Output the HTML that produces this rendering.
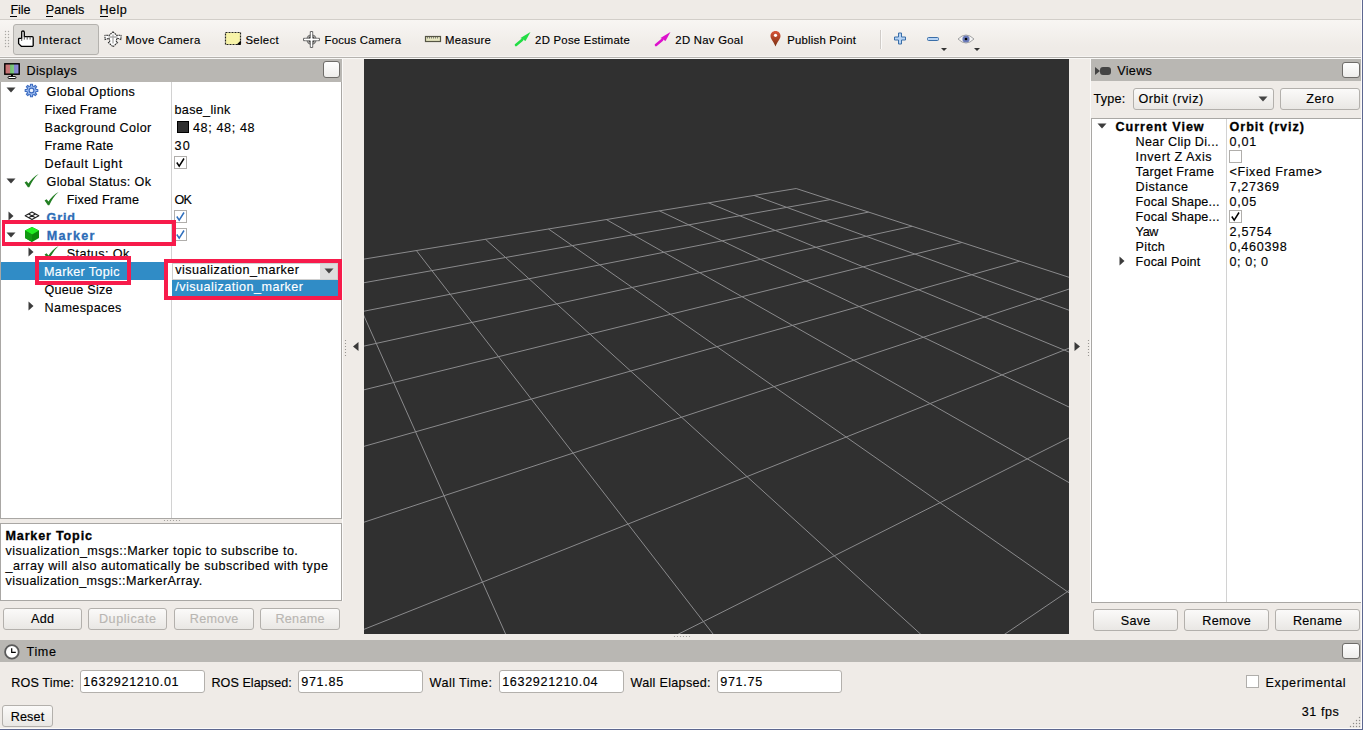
<!DOCTYPE html>
<html><head><meta charset="utf-8"><style>
html,body{margin:0;padding:0;}
body{width:1363px;height:730px;overflow:hidden;position:relative;background:#efebe7;font-family:"Liberation Sans",sans-serif;}
.a{position:absolute;}
.t{position:absolute;white-space:pre;line-height:normal;}
</style></head><body>
<div class="t" style="left:10.4px;top:3.0px;font-size:12.60px;letter-spacing:-0.074px;color:#000;-webkit-text-stroke:0.15px currentColor;">File</div>
<div class="t" style="left:45.8px;top:3.0px;font-size:12.60px;letter-spacing:0.020px;color:#000;-webkit-text-stroke:0.15px currentColor;">Panels</div>
<div class="t" style="left:99.5px;top:3.0px;font-size:12.60px;letter-spacing:0.481px;color:#000;-webkit-text-stroke:0.15px currentColor;">Help</div>
<div class="a" style="left:10px;top:16px;width:7px;height:1px;background:#000"></div>
<div class="a" style="left:46px;top:16px;width:7px;height:1px;background:#000"></div>
<div class="a" style="left:100px;top:16px;width:8px;height:1px;background:#000"></div>
<div class="a" style="left:0px;top:19px;width:1363px;height:1px;background:#d2cec9"></div>
<div class="a" style="left:0px;top:20px;width:1363px;height:36px;background:linear-gradient(#f8f6f3,#efebe7 75%)"></div>
<svg class="a" style="left:0;top:0" width="12" height="57"><circle cx="5.5" cy="31.5" r="0.7" fill="#a9a7a3"/><circle cx="5.5" cy="34.5" r="0.7" fill="#a9a7a3"/><circle cx="5.5" cy="37.5" r="0.7" fill="#a9a7a3"/><circle cx="5.5" cy="40.5" r="0.7" fill="#a9a7a3"/><circle cx="5.5" cy="43.5" r="0.7" fill="#a9a7a3"/><circle cx="5.5" cy="46.5" r="0.7" fill="#a9a7a3"/><circle cx="8.5" cy="31.5" r="0.7" fill="#a9a7a3"/><circle cx="8.5" cy="34.5" r="0.7" fill="#a9a7a3"/><circle cx="8.5" cy="37.5" r="0.7" fill="#a9a7a3"/><circle cx="8.5" cy="40.5" r="0.7" fill="#a9a7a3"/><circle cx="8.5" cy="43.5" r="0.7" fill="#a9a7a3"/><circle cx="8.5" cy="46.5" r="0.7" fill="#a9a7a3"/></svg>
<div class="a" style="left:13px;top:24px;width:86px;height:31px;background:#dcdad6;border:1px solid #b4b2ae;border-radius:3px;box-sizing:border-box"></div>
<div class="t" style="left:38.6px;top:34.0px;font-size:11.34px;letter-spacing:0.617px;color:#000;-webkit-text-stroke:0.15px currentColor;">Interact</div>
<div class="t" style="left:125.5px;top:34.0px;font-size:11.34px;letter-spacing:0.356px;color:#000;-webkit-text-stroke:0.15px currentColor;">Move Camera</div>
<div class="t" style="left:245.4px;top:34.0px;font-size:11.34px;letter-spacing:0.360px;color:#000;-webkit-text-stroke:0.15px currentColor;">Select</div>
<div class="t" style="left:324.5px;top:34.0px;font-size:11.34px;letter-spacing:0.209px;color:#000;-webkit-text-stroke:0.15px currentColor;">Focus Camera</div>
<div class="t" style="left:445.0px;top:34.0px;font-size:11.34px;letter-spacing:0.297px;color:#000;-webkit-text-stroke:0.15px currentColor;">Measure</div>
<div class="t" style="left:535.1px;top:34.0px;font-size:11.34px;letter-spacing:0.267px;color:#000;-webkit-text-stroke:0.15px currentColor;">2D Pose Estimate</div>
<div class="t" style="left:675.3px;top:34.0px;font-size:11.34px;letter-spacing:0.282px;color:#000;-webkit-text-stroke:0.15px currentColor;">2D Nav Goal</div>
<div class="t" style="left:787.3px;top:34.0px;font-size:11.34px;letter-spacing:0.213px;color:#000;-webkit-text-stroke:0.15px currentColor;">Publish Point</div>
<svg class="a" style="left:17px;top:30px" width="18" height="18" viewBox="0 0 18 18">
<path d="M4.7 8.3 L4.7 2.2 Q4.7 1.0 6.0 1.0 Q7.3 1.0 7.3 2.2 L7.3 6.6 L15.2 6.6 Q16.2 6.6 16.2 7.8 L16.2 15.6 L15.6 16.3 L4.3 16.3 L1.6 13.6 L1.6 8.9 Q1.6 8.3 2.4 8.3 Z" fill="#fff" stroke="#000" stroke-width="1.3" stroke-linejoin="round"/>
<path d="M4.7 8.3 L4.7 11 M7.3 6.6 L7.3 9.6 M10.2 6.6 L10.2 9.6 M13.1 6.6 L13.1 9.6" stroke="#444" stroke-width="0.9"/>
</svg>
<svg class="a" style="left:104px;top:30px" width="19" height="18" viewBox="0 0 19 18">
<path d="M9 1.8 L12.8 5.4 L17 5.2 L17 9.6 L13 8.2 L12.2 11.2 L13.6 12.4 L9 16.8 L4.4 12.4 L5.8 11.2 L5 8.2 L1 9.6 L1 5.2 L5.2 5.4 Z" fill="#fff" stroke="#2a2a2a" stroke-width="1.1" stroke-linejoin="round" stroke-dasharray="1.6 0.7"/>
<path d="M9 4.5 V13.5 M4.5 7 H13.5" stroke="#aaa" stroke-width="1.3"/>
</svg>
<svg class="a" style="left:224px;top:31px" width="18" height="15" viewBox="0 0 18 15">
<rect x="1.5" y="1.5" width="15" height="12" fill="#f7f3a8" stroke="#222" stroke-width="1.2" stroke-dasharray="2 1"/>
<path d="M12.5 13.8 L16.8 9.5 L16.8 13.8 Z" fill="#000"/>
</svg>
<svg class="a" style="left:302px;top:30px" width="19" height="19" viewBox="0 0 19 19">
<path d="M8.3 1.5 h2.4 v6.8 h6.8 v2.4 h-6.8 v6.8 h-2.4 v-6.8 h-6.8 v-2.4 h6.8 z" fill="#fff" stroke="#666" stroke-width="1"/>
<circle cx="9.5" cy="9.5" r="4.6" fill="none" stroke="#666" stroke-width="1.1"/>
<path d="M9.5 3 V16 M3 9.5 H16" stroke="#fff" stroke-width="1.3"/>
<path d="M6.6 6.6 h1.6 v1.6 h-1.6z M10.8 6.6 h1.6 v1.6 h-1.6z M6.6 10.8 h1.6 v1.6 h-1.6z M10.8 10.8 h1.6 v1.6 h-1.6z" fill="#444"/>
</svg>
<svg class="a" style="left:424px;top:35px" width="18" height="8" viewBox="0 0 18 8">
<rect x="1.5" y="1.5" width="15" height="5" fill="#e6e6c0" stroke="#555544" stroke-width="1.2"/>
<path d="M3.5 2 v1.5 M5.5 2 v1.5 M7.5 2 v1.5 M9.5 2 v1.5 M11.5 2 v1.5 M13.5 2 v1.5" stroke="#666" stroke-width="0.8"/>
</svg>
<svg class="a" style="left:514px;top:30px" width="18" height="17" viewBox="0 0 18 17">
<path d="M2 15 L8 10" stroke="#22dd44" stroke-width="2.6" stroke-linecap="round"/>
<path d="M16.5 2 L11.5 11 L6.5 8 Z" fill="#22dd44"/>
</svg>
<svg class="a" style="left:654px;top:30px" width="18" height="17" viewBox="0 0 18 17">
<path d="M2 15 L8 10" stroke="#dd11cc" stroke-width="2.6" stroke-linecap="round"/>
<path d="M16.5 2 L11.5 11 L6.5 8 Z" fill="#dd11cc"/>
</svg>
<svg class="a" style="left:769px;top:30px" width="13" height="18" viewBox="0 0 13 18">
<defs><linearGradient id="pg" x1="0" y1="0" x2="0" y2="1"><stop offset="0" stop-color="#d9553a"/><stop offset="1" stop-color="#7a3010"/></linearGradient></defs>
<path d="M6.5 1 C9.5 1 11.5 3.2 11.5 6 C11.5 9 8 12 6.5 16.5 C5 12 1.5 9 1.5 6 C1.5 3.2 3.5 1 6.5 1 Z" fill="url(#pg)"/>
<circle cx="6.5" cy="5.3" r="1.6" fill="#fff"/>
</svg>
<div class="a" style="left:880px;top:30px;width:1px;height:19px;background:#d0ccc8"></div>
<div class="a" style="left:881px;top:30px;width:1px;height:19px;background:#fbfaf9"></div>
<svg class="a" style="left:893px;top:32px" width="15" height="14" viewBox="0 0 15 14">
<path d="M5.5 1 h3 v4 h4 v3 h-4 v4 h-3 v-4 h-4 v-3 h4 z" fill="#b8d4f4" stroke="#3a6ea8" stroke-width="1"/>
</svg>
<svg class="a" style="left:926px;top:36px" width="15" height="7" viewBox="0 0 15 7">
<rect x="1.5" y="1.5" width="11" height="3" rx="1" fill="#b8d4f4" stroke="#3a6ea8" stroke-width="1"/>
</svg>
<svg class="a" style="left:940px;top:47px" width="8" height="5" viewBox="0 0 8 5"><path d="M1 1 L7 1 L4 4 Z" fill="#333"/></svg>
<svg class="a" style="left:957px;top:33px" width="18" height="12" viewBox="0 0 18 12">
<path d="M1 6 Q9 -2 17 6 Q9 14 1 6 Z" fill="#f4f4f4" stroke="#999" stroke-width="0.9"/>
<circle cx="9" cy="6" r="3.6" fill="#6a7ab8"/>
<circle cx="9" cy="6" r="1.3" fill="#000"/>
</svg>
<svg class="a" style="left:973px;top:47px" width="8" height="5" viewBox="0 0 8 5"><path d="M1 1 L7 1 L4 4 Z" fill="#333"/></svg>
<div class="a" style="left:0px;top:56px;width:1363px;height:1px;background:#f7f5f3"></div>
<div class="a" style="left:0px;top:57px;width:1363px;height:1px;background:#b5b2ae"></div>
<div class="a" style="left:0px;top:58px;width:1363px;height:1px;background:#f9f8f6"></div>
<div class="a" style="left:0px;top:59px;width:342px;height:23px;background:#b9b7b3"></div>
<svg class="a" style="left:3px;top:62px" width="18" height="18" viewBox="0 0 18 18">
<defs><linearGradient id="mg" x1="0" y1="0" x2="1" y2="0"><stop offset="0" stop-color="#c87070"/><stop offset="0.33" stop-color="#c87878"/><stop offset="0.4" stop-color="#70c070"/><stop offset="0.6" stop-color="#80c880"/><stop offset="0.68" stop-color="#8080d0"/><stop offset="1" stop-color="#9090d8"/></linearGradient></defs>
<rect x="1.8" y="1.8" width="14.4" height="10.4" fill="url(#mg)" stroke="#000" stroke-width="1.4"/>
<path d="M8 12.5 h2 v2 h-2z" fill="#000"/>
<rect x="5" y="14.5" width="8" height="2" rx="1" fill="#fff" stroke="#000" stroke-width="0.9"/>
</svg>
<div class="t" style="left:26.4px;top:64.0px;font-size:12.60px;letter-spacing:0.410px;color:#000;-webkit-text-stroke:0.15px currentColor;">Displays</div>
<div class="a" style="left:323px;top:61px;width:17px;height:17px;background:linear-gradient(#fefefe,#eeedeb);border:1px solid #6e6c69;border-radius:3px;box-sizing:border-box"></div>
<div class="a" style="left:0px;top:82px;width:342px;height:437px;background:#fff;border:1px solid #a9a7a4;border-top:none;box-sizing:border-box"></div>
<div class="a" style="left:171px;top:82px;width:1px;height:436px;background:#d2d2d2"></div>
<div class="a" style="left:1px;top:262px;width:340px;height:18px;background:#308cc6"></div>
<svg class="a" style="left:6px;top:87px" width="10" height="6" viewBox="0 0 10 6"><path d="M0.5 0.5 L9.5 0.5 L5 5.5 Z" fill="#3c3c3c"/></svg>
<svg class="a" style="left:24px;top:83px" width="15" height="15" viewBox="0 0 15 15">
<path d="M6.54 2.90 L6.45 1.19 L8.55 1.19 L8.46 2.90 L10.07 3.57 L11.22 2.29 L12.71 3.78 L11.43 4.93 L12.10 6.54 L13.81 6.45 L13.81 8.55 L12.10 8.46 L11.43 10.07 L12.71 11.22 L11.22 12.71 L10.07 11.43 L8.46 12.10 L8.55 13.81 L6.45 13.81 L6.54 12.10 L4.93 11.43 L3.78 12.71 L2.29 11.22 L3.57 10.07 L2.90 8.46 L1.19 8.55 L1.19 6.45 L2.90 6.54 L3.57 4.93 L2.29 3.78 L3.78 2.29 L4.93 3.57 Z" fill="#9cbcf0" stroke="#3d6cc0" stroke-width="1.1" stroke-linejoin="round"/>
<circle cx="7.5" cy="7.5" r="2.4" fill="#eef4ff" stroke="#3d6cc0" stroke-width="1.2"/>
</svg>
<div class="t" style="left:46.5px;top:85.0px;font-size:12.60px;letter-spacing:0.388px;color:#000;-webkit-text-stroke:0.15px currentColor;">Global Options</div>
<div class="t" style="left:44.6px;top:103.0px;font-size:12.60px;letter-spacing:0.158px;color:#000;-webkit-text-stroke:0.15px currentColor;">Fixed Frame</div>
<div class="t" style="left:174.5px;top:103.0px;font-size:12.60px;letter-spacing:0.324px;color:#000;-webkit-text-stroke:0.15px currentColor;">base_link</div>
<div class="t" style="left:44.6px;top:121.0px;font-size:12.60px;letter-spacing:0.392px;color:#000;-webkit-text-stroke:0.15px currentColor;">Background Color</div>
<div class="a" style="left:177px;top:121px;width:12px;height:12px;background:#303030;border:1px solid #000;box-sizing:border-box"></div>
<div class="t" style="left:193.0px;top:121.0px;font-size:12.60px;letter-spacing:0.608px;color:#000;-webkit-text-stroke:0.15px currentColor;">48; 48; 48</div>
<div class="t" style="left:44.6px;top:139.0px;font-size:12.60px;letter-spacing:0.244px;color:#000;-webkit-text-stroke:0.15px currentColor;">Frame Rate</div>
<div class="t" style="left:174.5px;top:139.0px;font-size:12.60px;letter-spacing:1.254px;color:#000;-webkit-text-stroke:0.15px currentColor;">30</div>
<div class="t" style="left:44.6px;top:157.0px;font-size:12.60px;letter-spacing:0.572px;color:#000;-webkit-text-stroke:0.15px currentColor;">Default Light</div>
<div class="a" style="left:174px;top:156px;width:13px;height:13px;border:1px solid #b0aeab;background:#fff;box-sizing:border-box"></div>
<svg class="a" style="left:174px;top:156px" width="13" height="13" viewBox="0 0 13 13"><path d="M2.8 6.5 L5.2 10.2 L10 2.5" fill="none" stroke="#000" stroke-width="1.5"/></svg>
<svg class="a" style="left:6px;top:178px" width="10" height="6" viewBox="0 0 10 6"><path d="M0.5 0.5 L9.5 0.5 L5 5.5 Z" fill="#3c3c3c"/></svg>
<svg class="a" style="left:24px;top:173px" width="16" height="15" viewBox="0 0 16 15"><path d="M0.6 9.6 L2.6 8.2 L4.5 10.6 Q8.5 4.2 14.6 1.0 Q9.2 5.6 5.3 14.2 L3.9 14.2 Z" fill="#237f23"/></svg>
<div class="t" style="left:46.5px;top:175.0px;font-size:12.60px;letter-spacing:0.365px;color:#000;-webkit-text-stroke:0.15px currentColor;">Global Status: Ok</div>
<svg class="a" style="left:44px;top:191px" width="16" height="15" viewBox="0 0 16 15"><path d="M0.6 9.6 L2.6 8.2 L4.5 10.6 Q8.5 4.2 14.6 1.0 Q9.2 5.6 5.3 14.2 L3.9 14.2 Z" fill="#237f23"/></svg>
<div class="t" style="left:66.7px;top:193.0px;font-size:12.60px;letter-spacing:0.158px;color:#000;-webkit-text-stroke:0.15px currentColor;">Fixed Frame</div>
<div class="t" style="left:174.5px;top:193.0px;font-size:12.60px;letter-spacing:-0.890px;color:#000;-webkit-text-stroke:0.15px currentColor;">OK</div>
<svg class="a" style="left:8px;top:211px" width="6" height="10" viewBox="0 0 6 10"><path d="M0.5 0.5 L5.5 5 L0.5 9.5 Z" fill="#3c3c3c"/></svg>
<svg class="a" style="left:24px;top:211px" width="16" height="10" viewBox="0 0 16 10">
<path d="M8 1 L14.8 4.8 L8 8.6 L1.2 4.8 Z M4.6 2.9 L11.4 6.7 M11.4 2.9 L4.6 6.7" fill="none" stroke="#222" stroke-width="1.15" stroke-linejoin="round"/>
</svg>
<div class="t" style="left:46.5px;top:211.0px;font-size:12.60px;letter-spacing:0.857px;color:#2d6cb6;font-weight:bold;-webkit-text-stroke:0.3px currentColor;">Grid</div>
<div class="a" style="left:174px;top:210px;width:13px;height:13px;border:1px solid #b0aeab;background:#fff;box-sizing:border-box"></div>
<svg class="a" style="left:174px;top:210px" width="13" height="13" viewBox="0 0 13 13"><path d="M2.8 6.5 L5.2 10.2 L10 2.5" fill="none" stroke="#2f6fbd" stroke-width="1.5"/></svg>
<svg class="a" style="left:6px;top:232px" width="10" height="6" viewBox="0 0 10 6"><path d="M0.5 0.5 L9.5 0.5 L5 5.5 Z" fill="#3c3c3c"/></svg>
<svg class="a" style="left:24px;top:226px" width="16" height="17" viewBox="0 0 16 17">
<path d="M8 1 L15 4.5 L15 12 L8 16 L1 12 L1 4.5 Z" fill="#0a8a0a"/>
<path d="M8 1 L15 4.5 L8 8.5 L1 4.5 Z" fill="#22ee22"/>
<path d="M1 4.5 L8 8.5 L8 16 L1 12 Z" fill="#129912"/>
</svg>
<div class="t" style="left:46.7px;top:229.0px;font-size:12.60px;letter-spacing:1.269px;color:#2d6cb6;font-weight:bold;-webkit-text-stroke:0.3px currentColor;">Marker</div>
<div class="a" style="left:174px;top:228px;width:13px;height:13px;border:1px solid #b0aeab;background:#fff;box-sizing:border-box"></div>
<svg class="a" style="left:174px;top:228px" width="13" height="13" viewBox="0 0 13 13"><path d="M2.8 6.5 L5.2 10.2 L10 2.5" fill="none" stroke="#2f6fbd" stroke-width="1.5"/></svg>
<svg class="a" style="left:28px;top:247px" width="6" height="10" viewBox="0 0 6 10"><path d="M0.5 0.5 L5.5 5 L0.5 9.5 Z" fill="#3c3c3c"/></svg>
<svg class="a" style="left:44px;top:245px" width="16" height="15" viewBox="0 0 16 15"><path d="M0.6 9.6 L2.6 8.2 L4.5 10.6 Q8.5 4.2 14.6 1.0 Q9.2 5.6 5.3 14.2 L3.9 14.2 Z" fill="#237f23"/></svg>
<div class="t" style="left:66.8px;top:247.0px;font-size:12.60px;letter-spacing:0.408px;color:#000;-webkit-text-stroke:0.15px currentColor;">Status: Ok</div>
<div class="t" style="left:44.0px;top:265.0px;font-size:12.60px;letter-spacing:0.326px;color:#fff;-webkit-text-stroke:0.15px currentColor;">Marker Topic</div>
<div class="t" style="left:44.6px;top:283.0px;font-size:12.60px;letter-spacing:0.225px;color:#000;-webkit-text-stroke:0.15px currentColor;">Queue Size</div>
<svg class="a" style="left:28px;top:301px" width="6" height="10" viewBox="0 0 6 10"><path d="M0.5 0.5 L5.5 5 L0.5 9.5 Z" fill="#3c3c3c"/></svg>
<div class="t" style="left:44.6px;top:301.0px;font-size:12.60px;letter-spacing:0.369px;color:#000;-webkit-text-stroke:0.15px currentColor;">Namespaces</div>
<div class="a" style="left:167px;top:262px;width:5px;height:34px;background:#fff"></div>
<div class="a" style="left:172px;top:263px;width:166px;height:17px;background:#fff;border:1px solid #cfcfcf;box-sizing:border-box"></div>
<div class="a" style="left:320px;top:264px;width:17px;height:15px;background:#dedede"></div>
<svg class="a" style="left:324px;top:268px" width="10" height="6" viewBox="0 0 10 6"><path d="M0.5 0.5 L9.5 0.5 L5 5.5 Z" fill="#444"/></svg>
<div class="t" style="left:175.3px;top:263.0px;font-size:12.60px;letter-spacing:0.470px;color:#000;-webkit-text-stroke:0.15px currentColor;">visualization_marker</div>
<div class="a" style="left:172px;top:280px;width:166px;height:16px;background:#308cc6"></div>
<div class="t" style="left:175.3px;top:280.0px;font-size:12.60px;letter-spacing:0.473px;color:#fff;-webkit-text-stroke:0.15px currentColor;">/visualization_marker</div>
<svg class="a" style="left:0;top:0" width="342" height="523"><circle cx="164.5" cy="520.5" r="0.6" fill="#9a9894"/><circle cx="167.5" cy="520.5" r="0.6" fill="#9a9894"/><circle cx="170.5" cy="520.5" r="0.6" fill="#9a9894"/><circle cx="173.5" cy="520.5" r="0.6" fill="#9a9894"/><circle cx="176.5" cy="520.5" r="0.6" fill="#9a9894"/><circle cx="179.5" cy="520.5" r="0.6" fill="#9a9894"/></svg>
<div class="a" style="left:0px;top:523px;width:342px;height:78px;background:#fff;border:1px solid #a9a7a4;box-sizing:border-box"></div>
<div class="t" style="left:5.5px;top:529.0px;font-size:12.60px;letter-spacing:0.819px;color:#000;font-weight:bold;-webkit-text-stroke:0.3px currentColor;">Marker Topic</div>
<div class="t" style="left:5.5px;top:544.0px;font-size:12.60px;letter-spacing:0.447px;color:#000;-webkit-text-stroke:0.15px currentColor;">visualization_msgs::Marker topic to subscribe to.</div>
<div class="t" style="left:5.5px;top:559.0px;font-size:12.60px;letter-spacing:0.510px;color:#000;-webkit-text-stroke:0.15px currentColor;">_array will also automatically be subscribed with type</div>
<div class="t" style="left:5.5px;top:574.0px;font-size:12.60px;letter-spacing:0.391px;color:#000;-webkit-text-stroke:0.15px currentColor;">visualization_msgs::MarkerArray.</div>
<div class="a" style="left:3px;top:608px;width:79px;height:22px;background:linear-gradient(#fbfaf9,#e9e7e4);border:1px solid #b3b0ac;border-radius:3px;box-sizing:border-box"></div>
<div class="t" style="left:30.9px;top:612.0px;font-size:12.60px;letter-spacing:0.407px;color:#000;-webkit-text-stroke:0.15px currentColor;">Add</div>
<div class="a" style="left:88px;top:608px;width:79px;height:22px;background:linear-gradient(#fbfaf9,#e9e7e4);border:1px solid #b3b0ac;border-radius:3px;box-sizing:border-box"></div>
<div class="t" style="left:98.9px;top:612.0px;font-size:12.60px;letter-spacing:0.580px;color:#b9b6b2;-webkit-text-stroke:0.15px currentColor;">Duplicate</div>
<div class="a" style="left:174px;top:608px;width:80px;height:22px;background:linear-gradient(#fbfaf9,#e9e7e4);border:1px solid #b3b0ac;border-radius:3px;box-sizing:border-box"></div>
<div class="t" style="left:189.7px;top:612.0px;font-size:12.60px;letter-spacing:0.356px;color:#b9b6b2;-webkit-text-stroke:0.15px currentColor;">Remove</div>
<div class="a" style="left:260px;top:608px;width:80px;height:22px;background:linear-gradient(#fbfaf9,#e9e7e4);border:1px solid #b3b0ac;border-radius:3px;box-sizing:border-box"></div>
<div class="t" style="left:275.4px;top:612.0px;font-size:12.60px;letter-spacing:0.317px;color:#b9b6b2;-webkit-text-stroke:0.15px currentColor;">Rename</div>
<div class="a" style="left:2px;top:220px;width:174px;height:26px;border:4px solid #f71b4b;border-left-width:3px;box-sizing:border-box"></div>
<div class="a" style="left:35px;top:256px;width:96px;height:29px;border:4px solid #f71b4b;box-sizing:border-box"></div>
<div class="a" style="left:164px;top:259px;width:178px;height:41px;border:4px solid #f71b4b;box-sizing:border-box"></div>
<div class="a" style="left:342px;top:59px;width:1px;height:542px;background:#fbfaf9"></div>
<svg class="a" style="left:0;top:0" width="1100" height="360"><circle cx="345.5" cy="340.5" r="0.6" fill="#8a8884"/><circle cx="1088.5" cy="340.5" r="0.6" fill="#8a8884"/><circle cx="345.5" cy="343.5" r="0.6" fill="#8a8884"/><circle cx="1088.5" cy="343.5" r="0.6" fill="#8a8884"/><circle cx="345.5" cy="346.5" r="0.6" fill="#8a8884"/><circle cx="1088.5" cy="346.5" r="0.6" fill="#8a8884"/><circle cx="345.5" cy="349.5" r="0.6" fill="#8a8884"/><circle cx="1088.5" cy="349.5" r="0.6" fill="#8a8884"/><circle cx="345.5" cy="352.5" r="0.6" fill="#8a8884"/><circle cx="1088.5" cy="352.5" r="0.6" fill="#8a8884"/><circle cx="345.5" cy="355.5" r="0.6" fill="#8a8884"/><circle cx="1088.5" cy="355.5" r="0.6" fill="#8a8884"/></svg>
<svg class="a" style="left:352px;top:341px" width="8" height="11" viewBox="0 0 8 11"><path d="M1 5.5 L6.5 1 L6.5 10 Z" fill="#3a3a3a"/></svg>
<svg class="a" style="left:1073px;top:341px" width="8" height="11" viewBox="0 0 8 11"><path d="M7 5.5 L1.5 1 L1.5 10 Z" fill="#3a3a3a"/></svg>
<svg class="a" style="left:364px;top:59px;background:#303030" width="705" height="575"><g stroke="#8a8a8c" stroke-width="1" fill="none"><line x1="1165.38" y1="368.12" x2="-625.80" y2="2239.53"/><line x1="1165.38" y1="368.12" x2="432.21" y2="129.53"/><line x1="1017.06" y1="319.86" x2="-426.70" y2="1299.41"/><line x1="1129.31" y1="405.81" x2="390.00" y2="136.42"/><line x1="899.02" y1="281.44" x2="-343.28" y2="905.50"/><line x1="1086.22" y1="450.83" x2="344.55" y2="143.84"/><line x1="802.84" y1="250.15" x2="-297.42" y2="688.94"/><line x1="1033.83" y1="505.56" x2="295.47" y2="151.86"/><line x1="722.97" y1="224.15" x2="-268.41" y2="551.96"/><line x1="968.77" y1="573.54" x2="242.29" y2="160.54"/><line x1="655.58" y1="202.22" x2="-248.41" y2="457.51"/><line x1="885.81" y1="660.21" x2="184.49" y2="169.98"/><line x1="597.95" y1="183.47" x2="-233.78" y2="388.44"/><line x1="776.38" y1="774.54" x2="121.44" y2="180.27"/><line x1="548.12" y1="167.25" x2="-222.62" y2="335.73"/><line x1="625.42" y1="932.27" x2="52.38" y2="191.55"/><line x1="504.59" y1="153.09" x2="-213.82" y2="294.19"/><line x1="403.74" y1="1163.88" x2="-23.59" y2="203.95"/><line x1="466.24" y1="140.61" x2="-206.71" y2="260.60"/><line x1="46.43" y1="1537.19" x2="-107.55" y2="217.66"/><line x1="432.21" y1="129.53" x2="-200.84" y2="232.89"/><line x1="-625.80" y1="2239.53" x2="-200.84" y2="232.89"/></g></svg>
<svg class="a" style="left:0;top:0" width="700" height="640"><circle cx="674.5" cy="636.5" r="0.6" fill="#9a9894"/><circle cx="677.5" cy="636.5" r="0.6" fill="#9a9894"/><circle cx="680.5" cy="636.5" r="0.6" fill="#9a9894"/><circle cx="683.5" cy="636.5" r="0.6" fill="#9a9894"/><circle cx="686.5" cy="636.5" r="0.6" fill="#9a9894"/><circle cx="689.5" cy="636.5" r="0.6" fill="#9a9894"/></svg>
<div class="a" style="left:1090px;top:59px;width:1px;height:544px;background:#fbfaf9"></div>
<div class="a" style="left:1091px;top:59px;width:271px;height:22px;background:#b9b7b3"></div>
<svg class="a" style="left:1094px;top:66px" width="18" height="10" viewBox="0 0 18 10">
<path d="M1 1 L6 5 L1 9 Z" fill="#444"/>
<rect x="6" y="1" width="11" height="8" rx="3" fill="#444"/>
</svg>
<div class="t" style="left:1117.2px;top:64.0px;font-size:12.60px;letter-spacing:0.336px;color:#000;-webkit-text-stroke:0.15px currentColor;">Views</div>
<div class="a" style="left:1342px;top:62px;width:18px;height:16px;background:linear-gradient(#fefefe,#eeedeb);border:1px solid #6e6c69;border-radius:3px;box-sizing:border-box"></div>
<div class="t" style="left:1093.6px;top:92.0px;font-size:12.60px;letter-spacing:0.197px;color:#000;-webkit-text-stroke:0.15px currentColor;">Type:</div>
<div class="a" style="left:1133px;top:88px;width:141px;height:22px;background:linear-gradient(#fbfaf9,#e9e7e4);border:1px solid #b3b0ac;border-radius:3px;box-sizing:border-box"></div>
<div class="t" style="left:1138.4px;top:92.0px;font-size:12.60px;letter-spacing:0.554px;color:#000;-webkit-text-stroke:0.15px currentColor;">Orbit (rviz)</div>
<svg class="a" style="left:1258px;top:96px" width="10" height="6" viewBox="0 0 10 6"><path d="M0.5 0.5 L9.5 0.5 L5 5.5 Z" fill="#444"/></svg>
<div class="a" style="left:1280px;top:88px;width:80px;height:22px;background:linear-gradient(#fbfaf9,#e9e7e4);border:1px solid #b3b0ac;border-radius:3px;box-sizing:border-box"></div>
<div class="t" style="left:1306.2px;top:92.0px;font-size:12.60px;letter-spacing:0.569px;color:#000;-webkit-text-stroke:0.15px currentColor;">Zero</div>
<div class="a" style="left:1091px;top:118px;width:271px;height:485px;background:#fff;border:1px solid #a9a7a4;box-sizing:border-box"></div>
<div class="a" style="left:1226px;top:119px;width:1px;height:483px;background:#d2d2d2"></div>
<svg class="a" style="left:1097px;top:123px" width="10" height="6" viewBox="0 0 10 6"><path d="M0.5 0.5 L9.5 0.5 L5 5.5 Z" fill="#3c3c3c"/></svg>
<div class="t" style="left:1115.5px;top:120.0px;font-size:12.60px;letter-spacing:0.973px;color:#000;font-weight:bold;-webkit-text-stroke:0.3px currentColor;">Current View</div>
<div class="t" style="left:1229.5px;top:120.0px;font-size:12.60px;letter-spacing:0.986px;color:#000;font-weight:bold;-webkit-text-stroke:0.3px currentColor;">Orbit (rviz)</div>
<div class="t" style="left:1135.6px;top:135.0px;font-size:12.60px;letter-spacing:0.324px;color:#000;-webkit-text-stroke:0.15px currentColor;">Near Clip Di...</div>
<div class="t" style="left:1229.5px;top:135.0px;font-size:12.60px;letter-spacing:0.732px;color:#000;-webkit-text-stroke:0.15px currentColor;">0,01</div>
<div class="t" style="left:1135.6px;top:150.0px;font-size:12.60px;letter-spacing:0.558px;color:#000;-webkit-text-stroke:0.15px currentColor;">Invert Z Axis</div>
<div class="t" style="left:1135.6px;top:165.0px;font-size:12.60px;letter-spacing:0.310px;color:#000;-webkit-text-stroke:0.15px currentColor;">Target Frame</div>
<div class="t" style="left:1229.5px;top:165.0px;font-size:12.60px;letter-spacing:0.581px;color:#000;-webkit-text-stroke:0.15px currentColor;">&lt;Fixed Frame&gt;</div>
<div class="t" style="left:1135.6px;top:180.0px;font-size:12.60px;letter-spacing:0.493px;color:#000;-webkit-text-stroke:0.15px currentColor;">Distance</div>
<div class="t" style="left:1229.5px;top:180.0px;font-size:12.60px;letter-spacing:0.680px;color:#000;-webkit-text-stroke:0.15px currentColor;">7,27369</div>
<div class="t" style="left:1135.6px;top:195.0px;font-size:12.60px;letter-spacing:0.207px;color:#000;-webkit-text-stroke:0.15px currentColor;">Focal Shape...</div>
<div class="t" style="left:1229.5px;top:195.0px;font-size:12.60px;letter-spacing:0.732px;color:#000;-webkit-text-stroke:0.15px currentColor;">0,05</div>
<div class="t" style="left:1135.6px;top:210.0px;font-size:12.60px;letter-spacing:0.207px;color:#000;-webkit-text-stroke:0.15px currentColor;">Focal Shape...</div>
<div class="t" style="left:1135.6px;top:225.0px;font-size:12.60px;letter-spacing:-0.365px;color:#000;-webkit-text-stroke:0.15px currentColor;">Yaw</div>
<div class="t" style="left:1229.5px;top:225.0px;font-size:12.60px;letter-spacing:0.690px;color:#000;-webkit-text-stroke:0.15px currentColor;">2,5754</div>
<div class="t" style="left:1135.6px;top:240.0px;font-size:12.60px;letter-spacing:0.301px;color:#000;-webkit-text-stroke:0.15px currentColor;">Pitch</div>
<div class="t" style="left:1229.5px;top:240.0px;font-size:12.60px;letter-spacing:0.672px;color:#000;-webkit-text-stroke:0.15px currentColor;">0,460398</div>
<div class="t" style="left:1135.6px;top:255.0px;font-size:12.60px;letter-spacing:0.168px;color:#000;-webkit-text-stroke:0.15px currentColor;">Focal Point</div>
<div class="t" style="left:1229.5px;top:255.0px;font-size:12.60px;letter-spacing:0.599px;color:#000;-webkit-text-stroke:0.15px currentColor;">0; 0; 0</div>
<div class="a" style="left:1229px;top:150px;width:13px;height:13px;border:1px solid #b0aeab;background:#fff;box-sizing:border-box"></div>
<div class="a" style="left:1229px;top:210px;width:13px;height:13px;border:1px solid #b0aeab;background:#fff;box-sizing:border-box"></div>
<svg class="a" style="left:1229px;top:210px" width="13" height="13" viewBox="0 0 13 13"><path d="M2.8 6.5 L5.2 10.2 L10 2.5" fill="none" stroke="#000" stroke-width="1.5"/></svg>
<svg class="a" style="left:1119px;top:256px" width="6" height="10" viewBox="0 0 6 10"><path d="M0.5 0.5 L5.5 5 L0.5 9.5 Z" fill="#3c3c3c"/></svg>
<div class="a" style="left:1093px;top:609px;width:85px;height:22px;background:linear-gradient(#fbfaf9,#e9e7e4);border:1px solid #b3b0ac;border-radius:3px;box-sizing:border-box"></div>
<div class="t" style="left:1120.8px;top:614.0px;font-size:12.60px;letter-spacing:0.245px;color:#000;-webkit-text-stroke:0.15px currentColor;">Save</div>
<div class="a" style="left:1184px;top:609px;width:85px;height:22px;background:linear-gradient(#fbfaf9,#e9e7e4);border:1px solid #b3b0ac;border-radius:3px;box-sizing:border-box"></div>
<div class="t" style="left:1202.2px;top:614.0px;font-size:12.60px;letter-spacing:0.356px;color:#000;-webkit-text-stroke:0.15px currentColor;">Remove</div>
<div class="a" style="left:1275px;top:609px;width:85px;height:22px;background:linear-gradient(#fbfaf9,#e9e7e4);border:1px solid #b3b0ac;border-radius:3px;box-sizing:border-box"></div>
<div class="t" style="left:1292.9px;top:614.0px;font-size:12.60px;letter-spacing:0.317px;color:#000;-webkit-text-stroke:0.15px currentColor;">Rename</div>
<div class="a" style="left:0px;top:640px;width:1362px;height:22px;background:#b9b7b3"></div>
<svg class="a" style="left:3px;top:643px" width="18" height="18" viewBox="0 0 18 18">
<circle cx="8.9" cy="8.9" r="6.8" fill="#fff" stroke="#5a5a5a" stroke-width="1.8"/>
<path d="M8.7 5.2 V9.4 H12.8" fill="none" stroke="#000" stroke-width="1.2"/>
</svg>
<div class="t" style="left:26.6px;top:645.0px;font-size:12.60px;letter-spacing:0.612px;color:#000;-webkit-text-stroke:0.15px currentColor;">Time</div>
<div class="a" style="left:1342px;top:643px;width:18px;height:16px;background:linear-gradient(#fefefe,#eeedeb);border:1px solid #6e6c69;border-radius:3px;box-sizing:border-box"></div>
<div class="t" style="left:11.3px;top:676.0px;font-size:12.60px;letter-spacing:0.127px;color:#000;-webkit-text-stroke:0.15px currentColor;">ROS Time:</div>
<div class="a" style="left:80px;top:670px;width:125px;height:23px;background:#fff;border:1px solid #b3b0ac;border-radius:3px;box-sizing:border-box"></div>
<div class="t" style="left:83.2px;top:675.0px;font-size:12.60px;letter-spacing:0.653px;color:#000;-webkit-text-stroke:0.15px currentColor;">1632921210.01</div>
<div class="t" style="left:211.4px;top:676.0px;font-size:12.60px;letter-spacing:0.051px;color:#000;-webkit-text-stroke:0.15px currentColor;">ROS Elapsed:</div>
<div class="a" style="left:298px;top:670px;width:125px;height:23px;background:#fff;border:1px solid #b3b0ac;border-radius:3px;box-sizing:border-box"></div>
<div class="t" style="left:301.2px;top:675.0px;font-size:12.60px;letter-spacing:0.690px;color:#000;-webkit-text-stroke:0.15px currentColor;">971.85</div>
<div class="t" style="left:429.6px;top:676.0px;font-size:12.60px;letter-spacing:0.445px;color:#000;-webkit-text-stroke:0.15px currentColor;">Wall Time:</div>
<div class="a" style="left:499px;top:670px;width:125px;height:23px;background:#fff;border:1px solid #b3b0ac;border-radius:3px;box-sizing:border-box"></div>
<div class="t" style="left:502.2px;top:675.0px;font-size:12.60px;letter-spacing:0.653px;color:#000;-webkit-text-stroke:0.15px currentColor;">1632921210.04</div>
<div class="t" style="left:630.5px;top:676.0px;font-size:12.60px;letter-spacing:0.296px;color:#000;-webkit-text-stroke:0.15px currentColor;">Wall Elapsed:</div>
<div class="a" style="left:717px;top:670px;width:125px;height:23px;background:#fff;border:1px solid #b3b0ac;border-radius:3px;box-sizing:border-box"></div>
<div class="t" style="left:720.2px;top:675.0px;font-size:12.60px;letter-spacing:0.690px;color:#000;-webkit-text-stroke:0.15px currentColor;">971.75</div>
<div class="a" style="left:1246px;top:675px;width:13px;height:13px;border:1px solid #b0aeab;background:#fff;box-sizing:border-box"></div>
<div class="t" style="left:1265.6px;top:676.0px;font-size:12.60px;letter-spacing:0.590px;color:#000;-webkit-text-stroke:0.15px currentColor;">Experimental</div>
<div class="a" style="left:2px;top:705px;width:51px;height:22px;background:linear-gradient(#fbfaf9,#e9e7e4);border:1px solid #b3b0ac;border-radius:3px;box-sizing:border-box"></div>
<div class="t" style="left:10.7px;top:710.0px;font-size:12.60px;letter-spacing:0.152px;color:#000;-webkit-text-stroke:0.15px currentColor;">Reset</div>
<div class="t" style="left:1301.7px;top:705.0px;font-size:12.60px;letter-spacing:0.571px;color:#000;-webkit-text-stroke:0.15px currentColor;">31 fps</div>
<svg class="a" style="left:0;top:0" width="1363" height="730"><circle cx="1359.5" cy="717.5" r="0.7" fill="#8f8d8a"/><circle cx="1356.5" cy="720.5" r="0.7" fill="#8f8d8a"/><circle cx="1359.5" cy="720.5" r="0.7" fill="#8f8d8a"/><circle cx="1353.5" cy="723.5" r="0.7" fill="#8f8d8a"/><circle cx="1356.5" cy="723.5" r="0.7" fill="#8f8d8a"/><circle cx="1359.5" cy="723.5" r="0.7" fill="#8f8d8a"/><circle cx="1350.5" cy="726.5" r="0.7" fill="#8f8d8a"/><circle cx="1353.5" cy="726.5" r="0.7" fill="#8f8d8a"/><circle cx="1356.5" cy="726.5" r="0.7" fill="#8f8d8a"/><circle cx="1359.5" cy="726.5" r="0.7" fill="#8f8d8a"/></svg>
<div class="a" style="left:1361px;top:0px;width:1px;height:729px;background:#fcfbfa"></div>
<div class="a" style="left:0px;top:728px;width:1362px;height:1px;background:#fcfbfa"></div>
<div class="a" style="left:1362px;top:0px;width:1px;height:730px;background:#5d6790"></div>
<div class="a" style="left:0px;top:729px;width:1363px;height:1px;background:#5d6790"></div>

</body></html>
